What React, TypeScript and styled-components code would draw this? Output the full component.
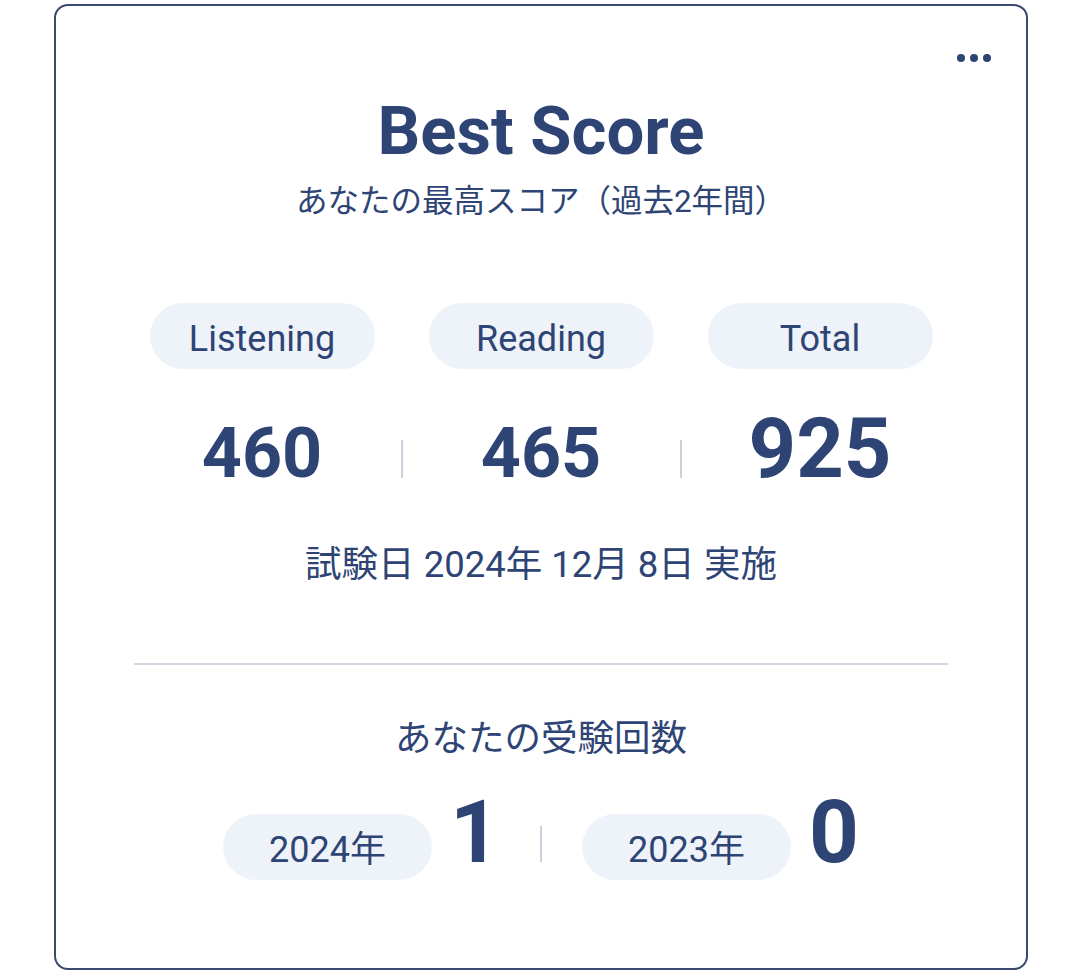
import React from 'react';
import styled, { createGlobalStyle } from 'styled-components';

const GlobalStyle = createGlobalStyle`
  body {
    margin: 0;
    background: #ffffff;
    font-family: Roboto, "Noto Sans CJK JP", sans-serif;
    color: #2e4475;
  }
`;

const Page = styled.div`
  padding: 4px 0 6px 54px;
`;

const Card = styled.section`
  position: relative;
  box-sizing: border-box;
  width: 974px;
  height: 966px;
  border: 2px solid #3b4870;
  border-radius: 14px;
  background: #fff;
  display: flex;
  flex-direction: column;
  align-items: center;
  padding-top: 85px;
`;

const MoreButton = styled.button`
  position: absolute;
  top: 41px;
  right: 28px;
  display: flex;
  gap: 5px;
  padding: 7px;
  border: none;
  background: transparent;
  cursor: pointer;

  span {
    width: 8px;
    height: 8px;
    border-radius: 50%;
    background: #2e4475;
  }
`;

const Title = styled.h1`
  margin: 0;
  font-size: 67px;
  line-height: 80px;
  font-weight: 700;
`;

const Subtitle = styled.p`
  margin: 11px 0 0;
  font-size: 31.5px;
  line-height: 40px;
`;

const ScoreGrid = styled.div`
  margin-top: 81px;
  display: grid;
  grid-template-columns: 225px 2px 225px 2px 225px;
  column-gap: 26px;
  row-gap: 38px;
  align-items: baseline;
  justify-items: center;
`;

const Pill = styled.div<{ $width: number }>`
  box-sizing: border-box;
  width: ${p => p.$width}px;
  height: 66px;
  padding-top: 6px;
  border-radius: 33px;
  background: #eef3f9;
  font-size: 36px;
  line-height: 60px;
  text-align: center;
`;

const Score = styled.div<{ $big?: boolean }>`
  font-size: ${p => (p.$big ? 83 : 70)}px;
  line-height: 1;
  font-weight: 700;
`;

const Separator = styled.div<{ $height: number }>`
  width: 2px;
  height: ${p => p.$height}px;
  background: #c8d0dc;
  align-self: end;
  margin-bottom: 12px;
`;

const ExamDate = styled.p`
  margin: 52px 0 0;
  font-size: 36.5px;
  line-height: 46px;
`;

const Divider = styled.hr`
  margin: 75px 0 0;
  width: 814px;
  height: 2px;
  border: none;
  background: #cfd7e2;
`;

const CountHeading = styled.h2`
  margin: 51px 0 0;
  font-size: 36.5px;
  line-height: 46px;
  font-weight: 400;
`;

const CountRow = styled.div`
  margin-top: 27px;
  display: flex;
  align-items: baseline;
  gap: 40px;
`;

const CountItem = styled.div`
  display: flex;
  align-items: baseline;
  gap: 18px;
`;

const CountValue = styled.div`
  font-size: 87px;
  line-height: 1;
  font-weight: 700;
`;

const CountSeparator = styled.div`
  width: 2px;
  height: 36px;
  background: #c8d0dc;
`;

const scores = [
  { label: 'Listening', value: 460 },
  { label: 'Reading', value: 465 },
  { label: 'Total', value: 925, big: true },
];

const counts = [
  { year: '2024年', value: 1 },
  { year: '2023年', value: 0 },
];

export default function App() {
  return (
    <>
      <GlobalStyle />
      <Page>
        <Card>
          <MoreButton aria-label="more">
            <span />
            <span />
            <span />
          </MoreButton>
          <Title>Best Score</Title>
          <Subtitle>あなたの最高スコア（過去2年間）</Subtitle>

          <ScoreGrid>
            {scores.map((s, i) => (
              <React.Fragment key={s.label}>
                {i > 0 && <div />}
                <Pill $width={225}>{s.label}</Pill>
              </React.Fragment>
            ))}
            {scores.map((s, i) => (
              <React.Fragment key={s.label}>
                {i > 0 && <Separator $height={38} />}
                <Score $big={s.big}>{s.value}</Score>
              </React.Fragment>
            ))}
          </ScoreGrid>

          <ExamDate>試験日 2024年 12月 8日 実施</ExamDate>

          <Divider />

          <CountHeading>あなたの受験回数</CountHeading>
          <CountRow>
            {counts.map((c, i) => (
              <React.Fragment key={c.year}>
                {i > 0 && <CountSeparator />}
                <CountItem>
                  <Pill $width={209}>{c.year}</Pill>
                  <CountValue>{c.value}</CountValue>
                </CountItem>
              </React.Fragment>
            ))}
          </CountRow>
        </Card>
      </Page>
    </>
  );
}
